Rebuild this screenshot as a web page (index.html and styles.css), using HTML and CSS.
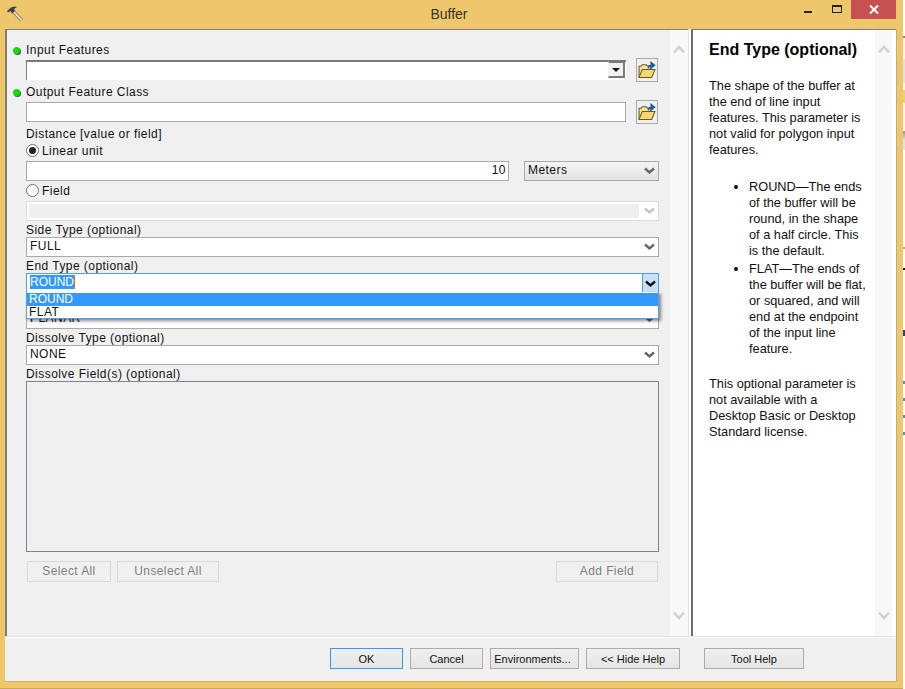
FILE: index.html
```html
<!DOCTYPE html>
<html lang="en">
<head>
<meta charset="utf-8">
<title>Buffer</title>
<link rel="stylesheet" href="styles.css">
</head>
<body>
<svg class="defs" width="0" height="0" aria-hidden="true">
  <defs>
    <symbol id="chev" viewBox="0 0 11 8"><path d="M1 1.5 5.5 5.5 10 1.5" fill="none" stroke="currentColor" stroke-width="2.4"/></symbol>
    <symbol id="up" viewBox="0 0 12 9"><path d="M1 7.5 6 2 11 7.5" fill="none" stroke="currentColor" stroke-width="2.6"/></symbol>
    <symbol id="down" viewBox="0 0 12 9"><path d="M1 1.5 6 7 11 1.5" fill="none" stroke="currentColor" stroke-width="2.6"/></symbol>
    <symbol id="folder" viewBox="0 0 17 17">
      <path d="M1 15.5V5h2l1-1.500h4l1 1.500h3v3" fill="#f7e39a" stroke="#6b5a20"/>
      <path d="M1 15.500 4 8h12l-3 7.500z" fill="#f6d873" stroke="#6b5a20"/>
      <path d="M10 4.500h4M12.500 1.500 15.500 4 12.500 6.500z" fill="#1d5ea8" stroke="#1d5ea8" stroke-width="1.500"/>
      <path d="M10 7V4.500" stroke="#1d5ea8" stroke-width="1.500"/>
    </symbol>
  </defs>
</svg>
<div class="desktop">
<div class="window">
  <header class="titlebar">
    <svg class="hammer" width="18" height="18" viewBox="0 0 18 18">
      <path d="M6.500 6.500 16 16.500" stroke="#858170" stroke-width="3.400"/>
      <path d="M6.500 6.500 16 16.500" stroke="#efe8cc" stroke-width="1.700"/>
      <path d="M1 7 5 3.500 8 2.500 11 3 8.500 4.500 8.500 7.500 6 9.500 4.500 7 2 8.500z" fill="#3f4348"/>
    </svg>
    <h1 class="title">Buffer</h1>
    <div class="winctrls">
      <span class="ctrl"><i class="min"></i></span>
      <span class="ctrl"><i class="max"></i></span>
      <span class="ctrl close"><svg width="10" height="9" viewBox="0 0 10 9"><path d="M1 .5 9 8.500M9 .5 1 8.500" stroke="#fff" stroke-width="2"/></svg></span>
    </div>
  </header>
  <div class="client">
    <div class="panes">
      <section class="form-pane">
        <div class="form">
          <div class="label first req"><i class="dot"></i>Input Features</div>
          <div class="pick-row">
            <div class="combo"><span class="combo-btn"></span></div>
            <button class="folder-btn" aria-label="Browse"><svg width="18" height="18"><use href="#folder"/></svg></button>
          </div>
          <div class="label gap req"><i class="dot"></i>Output Feature Class</div>
          <div class="pick-row">
            <div class="text-field wide"></div>
            <button class="folder-btn" aria-label="Browse"><svg width="18" height="18"><use href="#folder"/></svg></button>
          </div>
          <div class="label gap">Distance [value or field]</div>
          <div class="radio-row"><i class="radio on"></i>Linear unit</div>
          <div class="unit-row">
            <div class="text-field num">10</div>
            <div class="unit-select">Meters<svg class="arrow" width="11" height="8"><use href="#chev"/></svg></div>
          </div>
          <div class="radio-row"><i class="radio"></i>Field</div>
          <div class="select disabled"><span class="disabled-fill"></span><svg class="arrow" width="11" height="8"><use href="#chev"/></svg></div>
          <div class="label">Side Type (optional)</div>
          <div class="select"><span>FULL</span><svg class="arrow" width="11" height="8"><use href="#chev"/></svg></div>
          <div class="label">End Type (optional)</div>
          <div class="dropdown">
            <div class="select focus"><span class="sel-text">ROUND</span><span class="focus-btn"><svg class="arrow-dark" width="11" height="8"><use href="#chev"/></svg></span></div>
            <ul class="popup">
              <li class="pick">ROUND</li>
              <li>FLAT</li>
            </ul>
          </div>
          <div class="label">Method Type (optional)</div>
          <div class="select"><span>PLANAR</span><svg class="arrow" width="11" height="8"><use href="#chev"/></svg></div>
          <div class="label">Dissolve Type (optional)</div>
          <div class="select"><span>NONE</span><svg class="arrow" width="11" height="8"><use href="#chev"/></svg></div>
          <div class="label">Dissolve Field(s) (optional)</div>
          <div class="listbox"></div>
          <div class="list-actions">
            <button class="flat-btn b-select">Select All</button>
            <button class="flat-btn b-unselect">Unselect All</button>
            <button class="flat-btn b-add">Add Field</button>
          </div>
        </div>
        <div class="scroll"><svg width="12" height="9"><use href="#up"/></svg><svg width="12" height="9"><use href="#down"/></svg></div>
      </section>
      <div class="splitter"></div>
      <section class="help-pane">
        <div class="help">
          <h2>End Type (optional)</h2>
          <p>The shape of the buffer at<br>the end of line input<br>features. This parameter is<br>not valid for polygon input<br>features.</p>
          <ul>
            <li>ROUND—The ends<br>of the buffer will be<br>round, in the shape<br>of a half circle. This<br>is the default.</li>
            <li>FLAT—The ends of<br>the buffer will be flat,<br>or squared, and will<br>end at the endpoint<br>of the input line<br>feature.</li>
          </ul>
          <p>This optional parameter is<br>not available with a<br>Desktop Basic or Desktop<br>Standard license.</p>
        </div>
        <div class="scroll help-scroll"><svg width="12" height="9"><use href="#up"/></svg><svg width="12" height="9"><use href="#down"/></svg></div>
      </section>
    </div>
    <footer class="footer">
      <button class="btn b-ok">OK</button>
      <button class="btn b-cancel">Cancel</button>
      <button class="btn b-env">Environments...</button>
      <button class="btn b-hide">&lt;&lt; Hide Help</button>
      <button class="btn b-tool">Tool Help</button>
    </footer>
  </div>
</div>
<div class="desk-strip"></div>
</div>
</body>
</html>
```
FILE: styles.css
```css
* { box-sizing: border-box; }
html, body { margin: 0; padding: 0; }
body {
  width: 905px; height: 689px; overflow: hidden; background: #fff;
  font: 12px/16px "Liberation Sans", Arial, sans-serif; color: #111;
}
.defs { position: absolute; }
.desktop { display: flex; width: 905px; height: 689px; }
.desk-strip {
  flex: 1;
  background: linear-gradient(to bottom,
    #fff 0 36px, #888 36px 38px, #f4f4f4 38px 59px, #d8e4f2 59px 83px, #f4f4f4 83px 90px,
    #e8d27a 90px 103px, #f4f4f4 103px 131px, #999 131px 132px, #cfe8f5 140px 150px,
    #fff 150px 247px, #e8a060 247px 249px, #fff 249px 268px, #111 268px 270px,
    #fff 270px 330px, #1b3f9a 330px 336px, #fff 336px 381px,
    #2f9be0 381px 384px, #fff 384px 398px, #2f9be0 398px 401px, #fff 401px 415px,
    #2f9be0 415px 418px, #fff 418px 432px, #2f9be0 432px 435px, #fff 435px);
}
.window {
  width: 903px; height: 689px; background: #efc76b; flex: none;
  border-bottom: 1px solid #cfa952;
  display: flex; flex-direction: column;
}
.titlebar { height: 29px; flex: none; display: flex; position: relative; }
.hammer { margin: 4px 0 0 6px; }
.title {
  position: absolute; left: 0; right: 5px; top: 5px; margin: 0; text-align: center;
  font: 400 14px/18px "Liberation Sans", Arial, sans-serif; color: #333;
}
.winctrls { margin-left: auto; margin-right: 7px; display: flex; height: 19px; }
.ctrl { width: 29px; height: 19px; display: flex; align-items: center; justify-content: center; }
.close { width: 45px; background: #c75050; }
.min { display: block; width: 8px; height: 2px; background: #222; margin-top: 5px; }
.max { display: block; width: 10px; height: 8px; border: 1px solid #222; border-top-width: 2px; margin-top: -1px; }
.client {
  flex: 1; margin: 0 7px 7px 5px; background: #f0f0f0;
  display: flex; flex-direction: column;
  box-shadow: 0 1px 0 #d8b15c, 1px 0 0 #c9ab70;
}
.panes { height: 608px; flex: none; display: flex; border-bottom: 1px solid #e2e2e2; box-shadow: 0 1px 0 #fff; }
.form-pane {
  width: 683px; display: flex; flex: none;
  border-left: 2px solid #7d7d7d; border-top: 1px solid #808080;
}
.form { width: 663px; padding: 11px 11px 0 19px; letter-spacing: .45px; flex: none; }
.scroll {
  width: 18px; flex: none; background: #f8f8f8; color: #d2d2d2;
  display: flex; flex-direction: column; justify-content: space-between; align-items: center;
  padding: 15px 0 16px;
}
.splitter { width: 3px; flex: none; background: #fff; border-left: 1px solid #e2e2e2; }
.help-pane {
  flex: 1; display: flex; background: #fff;
  border-left: 2px solid #6f6f6f; border-top: 1px solid #808080;
}
.help { width: 182px; flex: none; padding: 11px 0 0 16px; font-size: 12.750px; line-height: 16px; color: #111; }
.help h2 { margin: 0 0 19px; font: 700 16px/18px "Liberation Sans", Arial, sans-serif; color: #000; }
.help p { margin: 0; }
.help ul { margin: 21px 0 19px; padding: 0 0 0 40px; }
.help li { margin: 0 0 2px; }
.help-scroll { width: 17px; }
.label { height: 16px; line-height: 18px; white-space: nowrap; }
.gap { margin-top: 1px; }
.dot {
  display: inline-block; width: 7px; height: 7px; border-radius: 50%; margin: 0 6px 0 -13px;
  background: #0be00b; box-shadow: 1px 1px 0 #2f6f2f;
}
.pick-row { height: 24px; margin-top: 1px; padding-right: 1px; display: flex; align-items: center; justify-content: space-between; }
.combo {
  width: 600px; height: 20px; background: #fff; position: relative;
  border-top: 2px solid #7a7a7a; border-left: 1px solid #7a7a7a;
}
.combo-btn {
  position: absolute; right: 1px; top: -1px; width: 17px; height: 17px;
  background: #f0f0f0; border: 2px solid #7a7a7a; border-left: 1px solid #eee;
}
.combo-btn::after {
  content: ""; position: absolute; left: 3px; top: 5px;
  border: 4px solid transparent; border-top: 4px solid #111; border-bottom: 0;
}
.text-field { height: 20px; background: #fff; border: 1px solid #a9a9a9; }
.wide { width: 600px; }
.folder-btn {
  width: 22px; height: 24px; padding: 0; background: #f0f0f0; border: 1px solid #a9a9a9;
  display: flex; align-items: center; justify-content: center;
}
.radio-row { height: 16px; margin-top: 1px; padding-top: 1px; display: flex; align-items: center; }
.radio {
  width: 13px; height: 13px; border: 1px solid #707070; border-radius: 50%; background: #fff; margin-right: 3px;
  flex: none; display: flex; align-items: center; justify-content: center;
}
.on::after { content: ""; width: 7px; height: 7px; border-radius: 50%; background: #222; }
.unit-row { margin-top: 3px; height: 20px; display: flex; justify-content: space-between; }
.num { width: 483px; text-align: right; padding-right: 2px; line-height: 16px; }
.unit-select {
  width: 135px; height: 20px; padding-left: 3px; line-height: 16px; position: relative;
  border: 1px solid #a9a9a9; background: linear-gradient(#f5f5f5, #e2e2e2);
}
.select {
  height: 20px; background: #fff; border: 1px solid #a9a9a9; padding-left: 3px;
  line-height: 16px; position: relative;
}
.arrow { position: absolute; right: 3px; top: 5px; color: #666; }
.disabled { margin-top: 3px; background: #fff; border-color: #dcdcdc; }
.disabled .arrow { color: #c4c4c4; }
.disabled-fill { position: absolute; left: 2px; top: 2px; width: 610px; height: 14px; background: #efefef; }
.dropdown { position: relative; }
.focus { border-color: #569de5; }
.sel-text { display: inline-block; height: 14px; line-height: 14px; vertical-align: top; margin-top: 1px; letter-spacing: 0; background: #3399ff; color: #fff; border-right: 1px solid #d9761c; }
.focus-btn {
  position: absolute; right: 0; top: 0; width: 16px; height: 18px;
  background: #c6e1fc; border-left: 1px solid #569de5;
}
.arrow-dark { position: absolute; left: 2px; top: 6px; color: #111; }
.popup {
  position: absolute; left: 0; right: 0; top: 19px; margin: 0; padding: 1px 0 0; list-style: none;
  height: 27px; background: #fff; border: 1px solid #569de5; border-top: 0;
  box-shadow: 2px 2px 3px rgba(0, 0, 0, .45); z-index: 2;
}
.popup li { height: 13px; line-height: 13px; padding-left: 2px; }
.popup .pick { background: #3399ff; color: #fff; letter-spacing: 0; }
.listbox { height: 171px; border: 1px solid #82828c; }
.list-actions { margin-top: 9px; display: flex; padding: 0 1px; }
.flat-btn {
  height: 21px; padding: 0 0 2px; background: #f0f0f0; border: 1px solid #d9d9d9; color: #808080;
  font: 12px/16px "Liberation Sans", Arial, sans-serif; letter-spacing: .4px;
}
.b-select { width: 84px; }
.b-unselect { width: 102px; margin-left: 6px; }
.b-add { width: 102px; margin-left: auto; }
.footer { flex: 1; display: flex; padding: 11px 0 0 325px; }
.btn {
  height: 21px; padding: 1px 0 0; border: 1px solid #acacac; background: linear-gradient(#f0f0f0, #e5e5e5); color: #111;
  font: 11px/16px "Liberation Sans", Arial, sans-serif;
}
.b-ok { width: 73px; border-color: #3399ff; }
.b-cancel { width: 73px; margin-left: 7px; }
.b-env { width: 89px; margin-left: 7px; padding-right: 4px; }
.b-hide { width: 94px; margin-left: 7px; }
.b-tool { width: 100px; margin-left: 24px; }
```
